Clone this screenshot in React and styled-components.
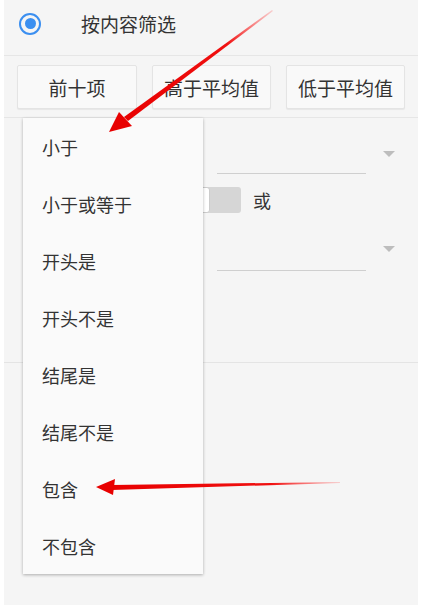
import React from "react";
import styled, { createGlobalStyle } from "styled-components";

const Global = createGlobalStyle`
  body {
    margin: 0;
    background: #ffffff;
    font-family: "Noto Sans CJK SC", "Noto Sans", sans-serif;
    color: #333;
  }
`

const Panel = styled.div`
  position: relative;
  margin: 0 4px;
  height: 605px;
  background: #f5f5f5;
  overflow: hidden;
`

const RadioRow = styled.label`
  display: flex;
  align-items: center;
  height: 47px;
  padding: 0 0 8px 15px;
  border-bottom: 1px solid #e6e6e6;
  font-size: 19px;
  color: #333;
`

const Radio = styled.span`
  box-sizing: border-box;
  width: 22px;
  height: 22px;
  border-radius: 50%;
  border: 2.5px solid #3b8ff0;
  display: flex;
  align-items: center;
  justify-content: center;
  margin-right: 40px;

  &::after {
    content: "";
    width: 11px;
    height: 11px;
    border-radius: 50%;
    background: #3b8ff0;
  }
`

const Buttons = styled.div`
  display: grid;
  grid-template-columns: 120px 119px 119px;
  gap: 15px;
  padding: 9px 13px 8px;
  border-bottom: 1px solid #e6e6e6;
`

const Btn = styled.button`
  height: 44px;
  border: 1px solid #e4e4e4;
  border-radius: 2px;
  background: #f9f9f9;
  box-shadow: 0 1px 1px rgba(0, 0, 0, 0.06);
  font-family: inherit;
  font-size: 19px;
  color: #333;
  padding: 0;
`

const Conditions = styled.div`
  padding: 0 0 91px 18px;
  border-bottom: 1px solid #e4e4e4;
`

const SelectRow = styled.div`
  display: flex;
  align-items: flex-end;
  height: ${p => p.h}px;
`

const Field = styled.div`
  width: 181px;
  height: 100%;
`

const Input = styled.div`
  width: 149px;
  margin-left: 14px;
  border-bottom: 1px solid #cfcfcf;
`

const Caret = styled.span`
  width: 0;
  height: 0;
  border-left: 6px solid transparent;
  border-right: 6px solid transparent;
  border-top: 6px solid #bdbdbd;
  margin: 0 0 ${p => p.lift}px 17px;
`

const SwitchRow = styled.div`
  display: flex;
  align-items: center;
  margin-top: 13px;
  height: 26px;
  font-size: 18px;
`

const Switch = styled.span`
  display: flex;
  width: 60px;
  height: 26px;
  margin-left: 159px;
  border-radius: 3px;
  background: #d6d6d6;
`

const Thumb = styled.span`
  box-sizing: border-box;
  width: 29px;
  height: 26px;
  border-radius: 3px;
  background: #ffffff;
  border: 1px solid #cccccc;
`

const Label = styled.span`
  margin-left: 12px;
`

const Menu = styled.ul`
  position: absolute;
  left: 19px;
  top: 118px;
  width: 180px;
  margin: 0;
  padding: 0;
  list-style: none;
  background: #fafafa;
  box-shadow: 0 1px 3px rgba(0, 0, 0, 0.3);
`

const Item = styled.li`
  height: 57px;
  display: flex;
  align-items: center;
  padding-left: 19px;
  font-size: 18px;
  color: #333;
`

const Arrows = styled.svg`
  position: absolute;
  left: -4px;
  top: 0;
  pointer-events: none;
`

const items = ["小于", "小于或等于", "开头是", "开头不是", "结尾是", "结尾不是", "包含", "不包含"]

export default function App() {
  return (
    <>
      <Global />
      <Panel>
        <RadioRow>
          <Radio />
          按内容筛选
        </RadioRow>
        <Buttons>
          <Btn>前十项</Btn>
          <Btn>高于平均值</Btn>
          <Btn>低于平均值</Btn>
        </Buttons>
        <Conditions>
          <SelectRow h={56}>
            <Field />
            <Input />
            <Caret lift={17} />
          </SelectRow>
          <SwitchRow>
            <Switch>
              <Thumb />
            </Switch>
            <Label>或</Label>
          </SwitchRow>
          <SelectRow h={58}>
            <Field />
            <Input />
            <Caret lift={19} />
          </SelectRow>
        </Conditions>

        <Menu>
          {items.map(t => <Item key={t}>{t}</Item>)}
        </Menu>

        <Arrows width="422" height="605" viewBox="0 0 422 605">
          <defs>
            <linearGradient id="g1" x1="272" y1="10" x2="120" y2="122" gradientUnits="userSpaceOnUse">
              <stop offset="0" stopColor="#ff3030" stopOpacity="0.2" />
              <stop offset="0.3" stopColor="#f01010" />
              <stop offset="1" stopColor="#e80000" />
            </linearGradient>
            <linearGradient id="g2" x1="340" y1="482" x2="110" y2="487" gradientUnits="userSpaceOnUse">
              <stop offset="0" stopColor="#ff3030" stopOpacity="0.2" />
              <stop offset="0.3" stopColor="#f01010" />
              <stop offset="1" stopColor="#e80000" />
            </linearGradient>
          </defs>
          <polygon points="272,10 273,11 128,121 124,117" fill="url(#g1)" />
          <polygon points="109,132 119,112 132,126" fill="#e80000" />
          <polygon points="340,482 340,483 112,490 112,485" fill="url(#g2)" />
          <polygon points="96,487 115,479 113,495" fill="#e80000" />
        </Arrows>
      </Panel>
    </>
  );
}
